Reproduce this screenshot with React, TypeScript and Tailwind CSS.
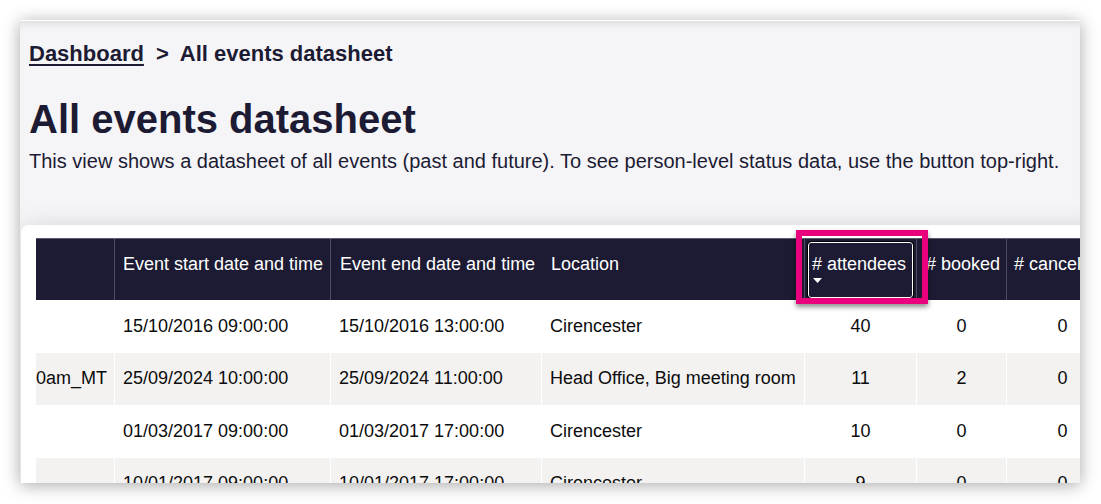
import React from "react";

const font = { fontFamily: '"Liberation Sans", Arial, sans-serif' };

type Row = { id: string; start: string; end: string; loc: string; att: string; booked: string; cancel: string };

const rows: Row[] = [
  { id: "", start: "15/10/2016 09:00:00", end: "15/10/2016 13:00:00", loc: "Cirencester", att: "40", booked: "0", cancel: "0" },
  { id: "0am_MT", start: "25/09/2024 10:00:00", end: "25/09/2024 11:00:00", loc: "Head Office, Big meeting room", att: "11", booked: "2", cancel: "0" },
  { id: "", start: "01/03/2017 09:00:00", end: "01/03/2017 17:00:00", loc: "Cirencester", att: "10", booked: "0", cancel: "0" },
  { id: "", start: "10/01/2017 09:00:00", end: "10/01/2017 17:00:00", loc: "Cirencester", att: "9", booked: "0", cancel: "0" },
];

export default function App() {
  return (
    <div className="w-[1101px] h-[504px] bg-white pt-[20px] pl-[20px] overflow-hidden" style={font}>
      <div className="w-[1060px] h-[463px] overflow-hidden bg-[#f5f5f8] border-t border-white shadow-[0_2px_16px_rgba(0,0,0,0.35),inset_0_9px_8px_-6px_rgba(0,0,0,0.10)] text-[#1c1b33]">
        <div className="pl-[9px] pt-[20px]">
          <nav className="flex items-center text-[22px] font-bold leading-[26px]">
            <a className="underline decoration-2 underline-offset-[3px]">Dashboard</a>
            <span className="ml-[12px] mr-[11px]">&gt;</span>
            <span>All events datasheet</span>
          </nav>
          <h1 className="mt-[28px] text-[40px] font-bold leading-[48px]">All events datasheet</h1>
          <p className="mt-[6px] text-[20px] leading-[24px] whitespace-nowrap">
            This view shows a datasheet of all events (past and future). To see person-level status data, use the button top-right.
          </p>
        </div>
        <div className="mt-[52px] ml-[1px] w-[1200px] rounded-tl-lg bg-white pt-[13px] pl-[15px] pb-[40px] shadow-[0_0_24px_rgba(0,0,0,0.12)]">
          <div className="w-[1083px] border-t border-[#5c5c70] text-[18px] leading-[21px]">
            <div className="flex h-[61px] bg-[#1c1b33] text-white">
              <div className="w-[79px] shrink-0 border-r border-[#4d4d62]"></div>
              <div className="w-[216px] shrink-0 border-r border-[#4d4d62] pt-[15px] pl-[8px] whitespace-nowrap overflow-hidden">Event start date and time</div>
              <div className="w-[211px] shrink-0 pt-[15px] pl-[9px] whitespace-nowrap overflow-hidden">Event end date and time</div>
              <div className="w-[263px] shrink-0 border-r border-[#4d4d62] pt-[15px] pl-[9px] whitespace-nowrap">Location</div>
              <div className="relative w-[112px] shrink-0 border-r border-[#4d4d62]">
                <div className="absolute left-[3px] right-[3px] top-[3px] bottom-[2px] rounded-[3px] border-[1.5px] border-white outline outline-1 outline-black pl-[3px] pt-[11px] whitespace-nowrap">
                  # attendees
                  <svg className="mt-[3px] ml-[1px] block" width="9" height="5" viewBox="0 0 9 5">
                    <polygon points="0,0 9,0 4.5,5" fill="white" />
                  </svg>
                </div>
                <div className="absolute left-[-9px] top-[-9px] w-[132px] h-[74px] border-[6px] border-[#e8007d] shadow-[0_3px_5px_rgba(0,0,0,0.45)] pointer-events-none"></div>
              </div>
              <div className="w-[90px] shrink-0 border-r border-[#4d4d62] pt-[15px] pl-[9px] whitespace-nowrap">
                # booked
              </div>
              <div className="w-[112px] shrink-0 pt-[15px] pl-[7px] whitespace-nowrap"># cancelled</div>
            </div>
            <div className="text-[#0b0c0c]">
              {rows.map((r, i) => (
                <div key={i} className={"flex items-center h-[52.5px] " + (i % 2 === 1 ? "bg-[#f3f2f1]" : "bg-white")}>
                  <div className="w-[79px] shrink-0 self-stretch flex items-center border-r border-white whitespace-nowrap overflow-hidden">{r.id}</div>
                  <div className="w-[216px] shrink-0 self-stretch flex items-center border-r border-white pl-[8px] whitespace-nowrap">{r.start}</div>
                  <div className="w-[211px] shrink-0 self-stretch flex items-center border-r border-white pl-[8px] whitespace-nowrap">{r.end}</div>
                  <div className="w-[263px] shrink-0 self-stretch flex items-center border-r border-white pl-[8px] whitespace-nowrap">{r.loc}</div>
                  <div className="w-[112px] shrink-0 self-stretch flex items-center justify-center border-r border-white">{r.att}</div>
                  <div className="w-[90px] shrink-0 self-stretch flex items-center justify-center border-r border-white">{r.booked}</div>
                  <div className="w-[112px] shrink-0 self-stretch flex items-center justify-center border-r border-white">{r.cancel}</div>
                </div>
              ))}
            </div>
          </div>
        </div>
      </div>
    </div>
  );
}
